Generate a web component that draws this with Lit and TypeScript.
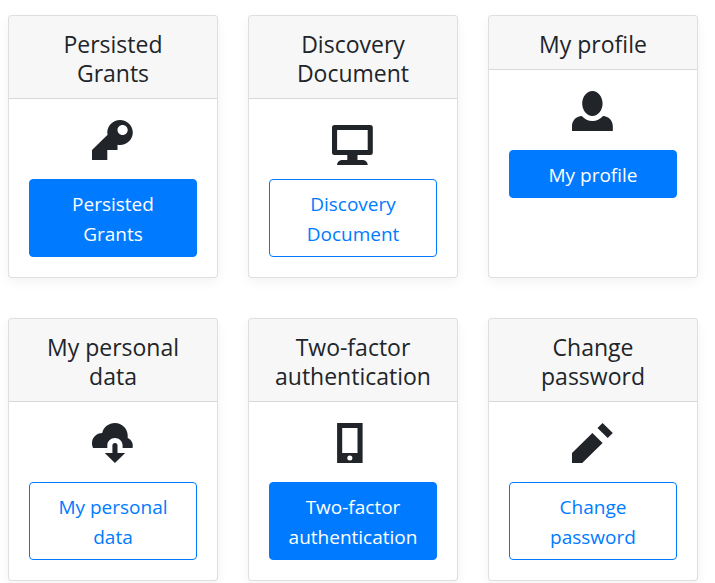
import { LitElement, html, css, svg } from "lit";
import { customElement, property } from "lit/decorators.js";

type IconName = "key" | "monitor" | "person" | "cloud" | "phone" | "pencil";

// Icon outlines on an 8-unit grid.
const icons: Record<IconName, string> = {
  key: "M5.5 0c-1.38 0-2.5 1.12-2.5 2.5 0 .16.03.32.06.47l-3.06 3.03v2h3v-2h2v-1l.03-.03c.15.03.31.03.47.03 1.38 0 2.5-1.12 2.5-2.5s-1.12-2.5-2.5-2.5zm.5 1c.55 0 1 .45 1 1s-.45 1-1 1-1-.45-1-1 .45-1 1-1z",
  monitor:
    "M.5 1a.5.5 0 0 0-.5.5v5a.5.5 0 0 0 .5.5h2.5v1h-1c-.55 0-1 .45-1 1h6c0-.55-.45-1-1-1h-1v-1h2.5a.5.5 0 0 0 .5-.5v-5a.5.5 0 0 0-.5-.5zm.5 1h6v4h-6z",
  person:
    "M4 0c-1.1 0-2 1.12-2 2.5s.9 2.5 2 2.5 2-1.12 2-2.5-.9-2.5-2-2.5zm-2.09 5c-1.06.05-1.91.92-1.91 2v1h8v-1c0-1.08-.84-1.95-1.91-2-.54.61-1.28 1-2.09 1-.81 0-1.55-.39-2.09-1z",
  cloud:
    "M4.5 0c-1.21 0-2.27.86-2.5 2-1.1 0-2 .9-2 2 0 .37.06.71.22 1h2.78v-.5c0-.83.67-1.5 1.5-1.5s1.5.67 1.5 1.5v.5h1.94c.03-.16.06-.32.06-.5 0-.65-.42-1.29-1-1.5v-.5c0-1.38-1.12-2.5-2.5-2.5zm0 4a.5.5 0 0 0-.5.5v1.5h-1.5l2 2 2-2h-1.5v-1.5a.5.5 0 0 0-.5-.5z",
  phone:
    "M1 0v8h5v-8zm1 1h3v5h-3zm1.5 5.5a.5.5 0 0 1 0 1 .5.5 0 0 1 0-1z",
  pencil: "M6 0l-1 1 2 2 1-1-2-2zm-2 2l-4 4v2h2l4-4-2-2z",
};

interface Tile {
  title: string;
  icon: IconName;
  href: string;
  primary: boolean;
}

const tiles: Tile[] = [
  { title: "Persisted Grants", icon: "key", href: "#grants", primary: true },
  { title: "Discovery Document", icon: "monitor", href: "#discovery", primary: false },
  { title: "My profile", icon: "person", href: "#profile", primary: true },
  { title: "My personal data", icon: "cloud", href: "#personal-data", primary: false },
  { title: "Two-factor authentication", icon: "phone", href: "#two-factor", primary: true },
  { title: "Change password", icon: "pencil", href: "#password", primary: false },
];

@customElement("nav-card")
export class NavCard extends LitElement {
  @property({ attribute: false }) tile!: Tile;

  static styles = css`
    :host {
      display: flex;
      flex-direction: column;
      box-sizing: border-box;
      min-width: 0;
      border: 1px solid rgba(0, 0, 0, 0.125);
      border-radius: 4px;
      background: #fff;
      box-shadow: 0 4px 12px rgba(0, 0, 0, 0.05);
      text-align: center;
    }
    .header {
      padding: 14px 20px 10px;
      border-bottom: 1px solid rgba(0, 0, 0, 0.125);
      border-radius: 3px 3px 0 0;
      background: rgba(0, 0, 0, 0.03);
    }
    .title {
      margin: 0;
      font-size: 23px;
      font-weight: 400;
      line-height: 29px;
    }
    .body {
      flex: 1;
      padding: 20px;
    }
    .icon {
      display: block;
      width: 42px;
      height: 60px;
      margin: 0 auto;
      fill: currentColor;
    }
    .button {
      display: block;
      padding: 9px 16px 7px;
      border: 1px solid #007bff;
      border-radius: 4px;
      color: #007bff;
      font-size: 19px;
      line-height: 30px;
      text-decoration: none;
    }
    .button.primary {
      background: #007bff;
      color: #fff;
    }
  `;

  render() {
    const { title, icon, href, primary } = this.tile;
    return html`
      <div class="header"><h4 class="title">${title}</h4></div>
      <div class="body">
        <svg class="icon" viewBox="0 0 42 60" aria-hidden="true">
          ${svg`<path transform="translate(0 1) scale(5.1 5)" fill-rule="evenodd" d=${icons[icon]}></path>`}
        </svg>
        <a class="button ${primary ? "primary" : ""}" href=${href}>${title}</a>
      </div>
    `;
  }
}

@customElement("app-root")
export class AppRoot extends LitElement {
  static styles = css`
    :host {
      display: block;
      color: #212529;
      background: #fff;
      font-family: "Segoe UI", "Open Sans", "Noto Sans", sans-serif;
    }
    .deck {
      display: grid;
      grid-template-columns: repeat(3, minmax(0, 1fr));
      gap: 40px 30px;
      padding: 15px 17px 2px 8px;
    }
  `;

  render() {
    return html`
      <main class="deck">
        ${tiles.map((tile) => html`<nav-card .tile=${tile}></nav-card>`)}
      </main>
    `;
  }
}
